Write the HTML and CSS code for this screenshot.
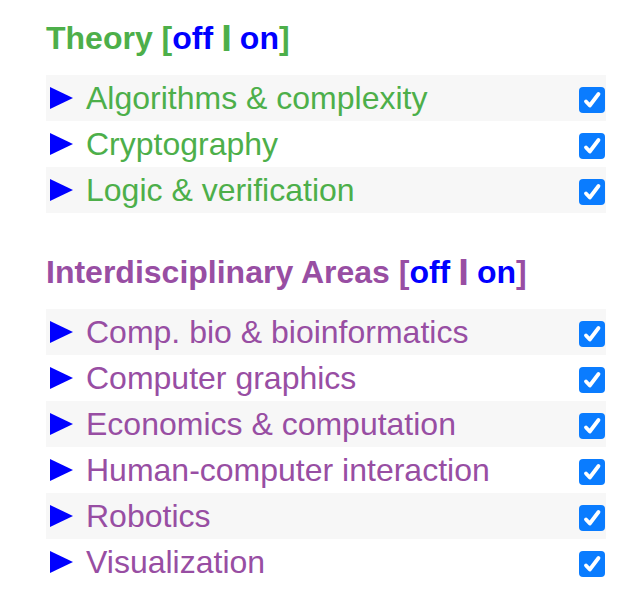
FILE: index.html
```html
<!DOCTYPE html>
<html>
<head>
<meta charset="utf-8">
<link rel="stylesheet" href="styles.css">
</head>
<body>
<div class="page">
  <section class="area theory">
    <h2 class="area-title">Theory <span class="toggle">[<a class="link">off</a> <span class="sep">|</span> <a class="link">on</a>]</span></h2>
    <ul class="list">
      <li class="row"><span class="tri"><svg width="23" height="22" viewBox="0 0 23 22"><polygon points="0,0 23,11 0,22" fill="#0000ff"/></svg></span><span class="label">Algorithms &amp; complexity</span><span class="check"><svg width="26" height="26" viewBox="0 0 26 26"><rect width="26" height="26" rx="4" fill="#0a7cff"/><path d="M7 14.5 L10.8 18.5 L19.5 7" fill="none" stroke="#fff" stroke-width="3.8" stroke-linecap="round" stroke-linejoin="round"/></svg></span></li>
      <li class="row"><span class="tri"><svg width="23" height="22" viewBox="0 0 23 22"><polygon points="0,0 23,11 0,22" fill="#0000ff"/></svg></span><span class="label">Cryptography</span><span class="check"><svg width="26" height="26" viewBox="0 0 26 26"><rect width="26" height="26" rx="4" fill="#0a7cff"/><path d="M7 14.5 L10.8 18.5 L19.5 7" fill="none" stroke="#fff" stroke-width="3.8" stroke-linecap="round" stroke-linejoin="round"/></svg></span></li>
      <li class="row"><span class="tri"><svg width="23" height="22" viewBox="0 0 23 22"><polygon points="0,0 23,11 0,22" fill="#0000ff"/></svg></span><span class="label">Logic &amp; verification</span><span class="check"><svg width="26" height="26" viewBox="0 0 26 26"><rect width="26" height="26" rx="4" fill="#0a7cff"/><path d="M7 14.5 L10.8 18.5 L19.5 7" fill="none" stroke="#fff" stroke-width="3.8" stroke-linecap="round" stroke-linejoin="round"/></svg></span></li>
    </ul>
  </section>
  <section class="area inter">
    <h2 class="area-title">Interdisciplinary Areas <span class="toggle">[<a class="link">off</a> <span class="sep">|</span> <a class="link">on</a>]</span></h2>
    <ul class="list">
      <li class="row"><span class="tri"><svg width="23" height="22" viewBox="0 0 23 22"><polygon points="0,0 23,11 0,22" fill="#0000ff"/></svg></span><span class="label">Comp. bio &amp; bioinformatics</span><span class="check"><svg width="26" height="26" viewBox="0 0 26 26"><rect width="26" height="26" rx="4" fill="#0a7cff"/><path d="M7 14.5 L10.8 18.5 L19.5 7" fill="none" stroke="#fff" stroke-width="3.8" stroke-linecap="round" stroke-linejoin="round"/></svg></span></li>
      <li class="row"><span class="tri"><svg width="23" height="22" viewBox="0 0 23 22"><polygon points="0,0 23,11 0,22" fill="#0000ff"/></svg></span><span class="label">Computer graphics</span><span class="check"><svg width="26" height="26" viewBox="0 0 26 26"><rect width="26" height="26" rx="4" fill="#0a7cff"/><path d="M7 14.5 L10.8 18.5 L19.5 7" fill="none" stroke="#fff" stroke-width="3.8" stroke-linecap="round" stroke-linejoin="round"/></svg></span></li>
      <li class="row"><span class="tri"><svg width="23" height="22" viewBox="0 0 23 22"><polygon points="0,0 23,11 0,22" fill="#0000ff"/></svg></span><span class="label">Economics &amp; computation</span><span class="check"><svg width="26" height="26" viewBox="0 0 26 26"><rect width="26" height="26" rx="4" fill="#0a7cff"/><path d="M7 14.5 L10.8 18.5 L19.5 7" fill="none" stroke="#fff" stroke-width="3.8" stroke-linecap="round" stroke-linejoin="round"/></svg></span></li>
      <li class="row"><span class="tri"><svg width="23" height="22" viewBox="0 0 23 22"><polygon points="0,0 23,11 0,22" fill="#0000ff"/></svg></span><span class="label">Human-computer interaction</span><span class="check"><svg width="26" height="26" viewBox="0 0 26 26"><rect width="26" height="26" rx="4" fill="#0a7cff"/><path d="M7 14.5 L10.8 18.5 L19.5 7" fill="none" stroke="#fff" stroke-width="3.8" stroke-linecap="round" stroke-linejoin="round"/></svg></span></li>
      <li class="row"><span class="tri"><svg width="23" height="22" viewBox="0 0 23 22"><polygon points="0,0 23,11 0,22" fill="#0000ff"/></svg></span><span class="label">Robotics</span><span class="check"><svg width="26" height="26" viewBox="0 0 26 26"><rect width="26" height="26" rx="4" fill="#0a7cff"/><path d="M7 14.5 L10.8 18.5 L19.5 7" fill="none" stroke="#fff" stroke-width="3.8" stroke-linecap="round" stroke-linejoin="round"/></svg></span></li>
      <li class="row"><span class="tri"><svg width="23" height="22" viewBox="0 0 23 22"><polygon points="0,0 23,11 0,22" fill="#0000ff"/></svg></span><span class="label">Visualization</span><span class="check"><svg width="26" height="26" viewBox="0 0 26 26"><rect width="26" height="26" rx="4" fill="#0a7cff"/><path d="M7 14.5 L10.8 18.5 L19.5 7" fill="none" stroke="#fff" stroke-width="3.8" stroke-linecap="round" stroke-linejoin="round"/></svg></span></li>
    </ul>
  </section>
</div>
</body>
</html>
```

FILE: styles.css
```css
* { box-sizing: border-box; }
html, body { margin: 0; padding: 0; background: #fff; }
body { font-family: "Liberation Sans", Arial, Helvetica, sans-serif; }
.page {
  width: 644px;
  padding: 20px 0 0 46px;
}
.area { width: 560px; margin-bottom: 41px; }
.theory { color: #4daf4a; }
.inter { color: #984ea3; }
.area-title {
  margin: 0 0 19px 0;
  height: 36px;
  font-size: 32px;
  line-height: 36px;
  font-weight: bold;
}
.link { color: #0000ff; text-decoration: none; }
.sep {
  display: inline-block;
  line-height: 32px;
  transform: translateY(-2px) scale(1.35, 0.85);
}
.list { list-style: none; margin: 0; padding: 0; }
.row {
  display: flex;
  align-items: flex-start;
  height: 46px;
  font-size: 32px;
  line-height: 46px;
}
.row:nth-child(odd) { background: #f7f7f7; }
.tri {
  display: flex;
  margin: 12px 0 0 4px;
  width: 23px;
  height: 22px;
}
.label { margin-left: 13px; flex: 1; }
.check {
  display: flex;
  margin-top: 12px;
  margin-right: 1px;
  width: 26px;
  height: 26px;
}
```
